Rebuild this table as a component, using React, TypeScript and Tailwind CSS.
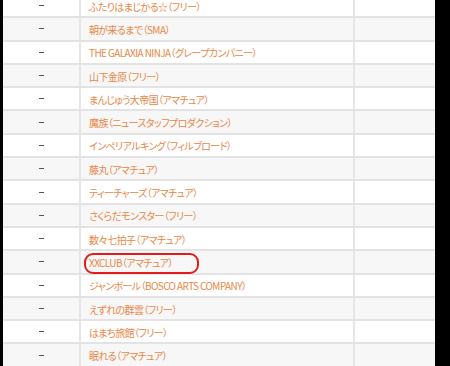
import React from "react";

const rows = [
  "ふたりはまじかる☆（フリー）",
  "朝が来るまで（SMA）",
  "THE GALAXIA NINJA（グレープカンパニー）",
  "山下金原（フリー）",
  "まんじゅう大帝国（アマチュア）",
  "魔族（ニュースタッフプロダクション）",
  "インペリアルキング（フィルブロード）",
  "藤丸（アマチュア）",
  "ティーチャーズ（アマチュア）",
  "さくらだモンスター（フリー）",
  "数々七拍子（アマチュア）",
  "XXCLUB（アマチュア）",
  "ジャンボール（BOSCO ARTS COMPANY）",
  "えずれの群雲（フリー）",
  "はまち旅館（フリー）",
  "眠れる（アマチュア）",
];

export default function App() {
  return (
    <div className="flex h-[366px] w-[450px] overflow-hidden bg-black pl-[3px]">
      <div className="relative h-full w-[432px] overflow-hidden bg-white">
        <div className="-mt-[5px] flex flex-col">
          {rows.map((name, i) => (
            <div
              key={i}
              className={
                "flex h-[23.3px] shrink-0 border-b-2 border-[#e3e3e3] " +
                (i % 2 === 1 ? "bg-[#f7f7f7]" : "bg-white")
              }
            >
              <div className="flex w-[78px] items-center justify-center border-r-2 border-[#e6e6e6]">
                <span className="block h-px w-[5px] bg-[#555]" />
              </div>
              <div
                className="flex w-[274px] items-center whitespace-nowrap border-r-2 border-[#e6e6e6] pl-[8px] pt-px text-[10px] tracking-[-0.6px] text-[#ea8746]"
                style={{
                  fontFamily: '"Noto Sans CJK JP", "Noto Sans", sans-serif',
                  fontFeatureSettings: '"palt"',
                }}
              >
                {name}
              </div>
              <div className="flex-1" />
            </div>
          ))}
        </div>
        {/* red marker around XXCLUB */}
        <div className="absolute left-[81px] top-[253px] h-[21px] w-[115px] rounded-[9px] border-2 border-[#e41b1b]" />
      </div>
    </div>
  );
}
